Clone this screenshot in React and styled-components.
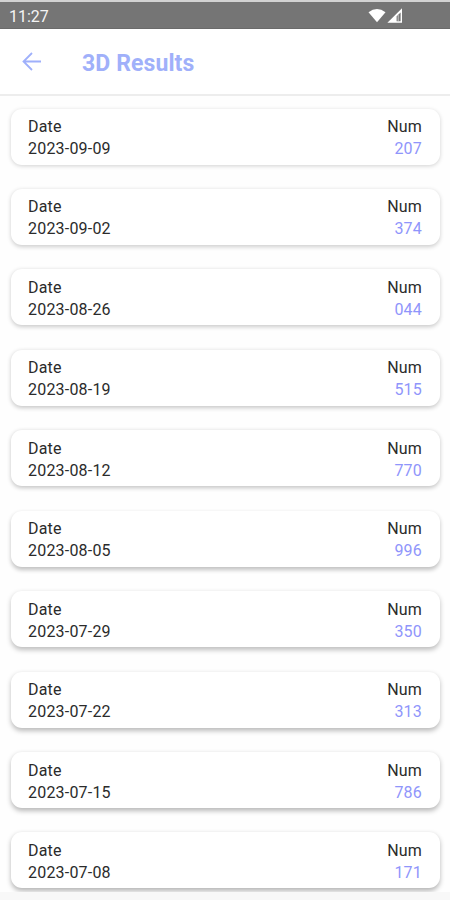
import React from 'react';
import styled, { createGlobalStyle } from 'styled-components';

const results = [
  { date: '2023-09-09', num: '207' },
  { date: '2023-09-02', num: '374' },
  { date: '2023-08-26', num: '044' },
  { date: '2023-08-19', num: '515' },
  { date: '2023-08-12', num: '770' },
  { date: '2023-08-05', num: '996' },
  { date: '2023-07-29', num: '350' },
  { date: '2023-07-22', num: '313' },
  { date: '2023-07-15', num: '786' },
  { date: '2023-07-08', num: '171' }
];

const App = () => {
  return (
    <Screen>
      <GlobalStyle />
      <StatusBar>
        <Clock>11:27</Clock>
        <StatusIcons width='36' height='18' viewBox='0 0 36 18'>
          <path d='M0.5 5.2Q9 -1.4 17.5 5.2L9 15.2Z' fill='#fff' />
          <path d='M34 1.2V15.8H19.4Z' fill='#fff' />
          <path d='M32.6 5.4V14.2H28.6V9.2Z' fill='#757575' />
          <path d='M30.2 8V14.2' stroke='#ddd' strokeWidth='0.8' />
        </StatusIcons>
      </StatusBar>
      <Header>
        <BackButton aria-label='Back'>
          <svg width='20' height='20' viewBox='0 0 20 20' fill='none'>
            <path
              d='M19 9.5H2M10 1L1.5 9.5L10 18'
              stroke='#9fb0fb'
              strokeWidth='1.8'
            />
          </svg>
        </BackButton>
        <Title>3D Results</Title>
      </Header>
      <List>
        {results.map((result, i) => (
          <Card key={result.date} $depth={i}>
            <Column>
              <Text>Date</Text>
              <Text>{result.date}</Text>
            </Column>
            <Column $right>
              <Text>Num</Text>
              <Text $accent>{result.num}</Text>
            </Column>
          </Card>
        ))}
      </List>
      <Footer />
    </Screen>
  );
};

export default App;

const GlobalStyle = createGlobalStyle`
  * {
    box-sizing: border-box;
  }
  body {
    margin: 0;
    background: #fff;
    font-family: Roboto, sans-serif;
  }
`;

const Screen = styled.div`
  display: flex;
  flex-direction: column;
  width: 450px;
  height: 900px;
  overflow: hidden;
  background: #fefefe;
`;

const StatusBar = styled.div`
  display: flex;
  flex: none;
  justify-content: space-between;
  height: 29px;
  padding: 5px 46px 0 9px;
  border-top: 2px solid #d2d2d2;
  border-bottom: 1px solid #6a6a6a;
  background: #757575;
`;

const Clock = styled.span`
  margin-top: 1px;
  color: #f4f4f4;
  font-size: 16px;
  line-height: 18px;
`;

const StatusIcons = styled.svg`
  display: block;
`;

const Header = styled.header`
  display: flex;
  flex: none;
  align-items: center;
  height: 67px;
  padding-left: 22px;
  border-bottom: 2px solid #ededed;
  background: #fff;
`;

const BackButton = styled.button`
  display: flex;
  width: 20px;
  padding: 0;
  border: none;
  background: none;
`;

const Title = styled.h1`
  margin: 4px 0 0 40px;
  color: #a0b0fa;
  font-size: 23px;
  font-weight: 700;
  line-height: 28px;
  letter-spacing: 0.1px;
`;

const List = styled.div`
  display: flex;
  flex: none;
  flex-direction: column;
  gap: 24.45px;
  height: 796px;
  padding: 12.5px 10.5px 0;
  overflow: hidden;
`;

// shadows get heavier towards the bottom of the screen, like android elevation
const Card = styled.div`
  display: flex;
  flex: none;
  justify-content: space-between;
  height: 56px;
  padding: 7.5px 17.5px 0;
  border-radius: 11px;
  background: #fff;
  box-shadow: 0 ${(props) => 1 + props.$depth * 0.22}px
    ${(props) => 4 + props.$depth * 0.15}px
    rgba(0, 0, 0, ${(props) => 0.18 + props.$depth * 0.012});
`;

const Column = styled.div`
  display: flex;
  flex-direction: column;
  align-items: ${(props) => (props.$right ? 'flex-end' : 'flex-start')};
`;

const Text = styled.span`
  color: ${(props) => (props.$accent ? '#8f95fb' : '#2b2b2b')};
  font-size: 16px;
  line-height: 22px;
  letter-spacing: 0.2px;
`;

const Footer = styled.div`
  flex: 1;
  background: #f8f8f8;
`;
